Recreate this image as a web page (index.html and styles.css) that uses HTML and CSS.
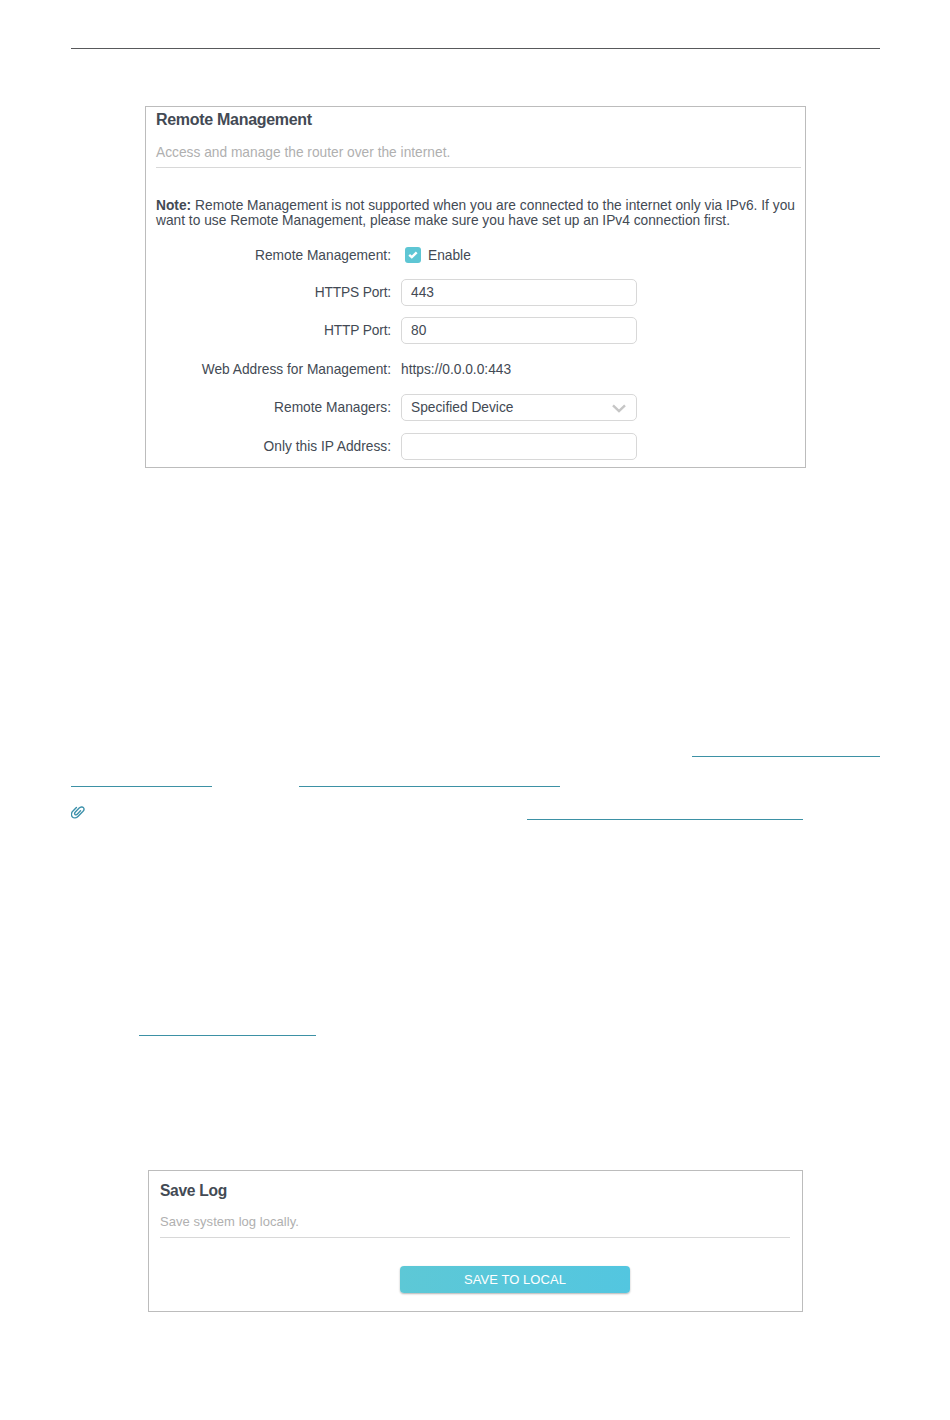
FILE: index.html
```
<!DOCTYPE html>
<html lang="en">
<head>
    <meta charset="UTF-8">
    <meta name="viewport" content="width=device-width, initial-scale=1.0">
    <title>Remote Management</title>
    <link rel="stylesheet" href="styles.css">
</head>
<body>
    <div class="page">
        <hr class="page-rule">

        <section class="panel remote">
            <h2>Remote Management</h2>
            <p class="subtitle">Access and manage the router over the internet.</p>
            <div class="note">
                <div class="note-first"><b>Note:</b> Remote Management is not supported when you are connected to the internet only via IPv6. If you</div>
                <div class="note-second">want to use Remote Management, please make sure you have set up an IPv4 connection first.</div>
            </div>
            <div class="form">
                <div class="row row-check">
                    <span class="label">Remote Management:</span>
                    <span class="checkbox">
                        <svg width="16" height="16" viewBox="0 0 16 16"><path d="M4.2 7.8l2.6 2.4 4.9-4.8" fill="none" stroke="#fff" stroke-width="2.4"/></svg>
                    </span>
                    <span>Enable</span>
                </div>
                <div class="row">
                    <span class="label label-tight">HTTPS Port:</span>
                    <div class="field">443</div>
                </div>
                <div class="row">
                    <span class="label label-tight">HTTP Port:</span>
                    <div class="field">80</div>
                </div>
                <div class="row">
                    <span class="label">Web Address for Management:</span>
                    <span class="address">https://0.0.0.0:443</span>
                </div>
                <div class="row">
                    <span class="label">Remote Managers:</span>
                    <div class="field select">
                        <span>Specified Device</span>
                        <svg width="14" height="9" viewBox="0 0 14 9"><path d="M1 1.4l6 5.8 6-5.8" fill="none" stroke="#c6c6c6" stroke-width="2.4"/></svg>
                    </div>
                </div>
                <div class="row">
                    <span class="label">Only this IP Address:</span>
                    <div class="field"></div>
                </div>
            </div>
        </section>

        <div class="links">
            <div class="link-row first"><span class="line line-a"></span></div>
            <div class="link-row second"><span class="line line-b"></span><span class="line line-c"></span></div>
            <div class="link-row third">
                <svg class="clip" width="14" height="13" viewBox="0 0 14 13">
                    <path d="M5.4 1.5L2 4.9C.2 6.9.1 9.4 1.4 10.9c1.5 1.5 4.1 1.1 5.8-.6l4.6-4.7c1.3-1.4 1.5-3 .6-4-.9-1-2.9-.8-4.2.5L4.4 6c-.9 1-.9 2-.4 2.5.6.6 1.5.4 2.2-.3l3.3-3.4" fill="none" stroke="#3d91ab" stroke-width="1.4" stroke-linecap="round"/>
                </svg>
                <span class="line line-d"></span>
            </div>
            <div class="link-row fourth"><span class="line line-e"></span></div>
        </div>

        <section class="panel log">
            <h2>Save Log</h2>
            <p class="subtitle">Save system log locally.</p>
            <button type="button">SAVE TO LOCAL</button>
        </section>
    </div>
</body>
</html>
```
FILE: styles.css
```
* {
    box-sizing: border-box;
}
body {
    margin: 0;
    background-color: #fff;
    color: #434a54;
    font-family: "Liberation Sans", Arial, sans-serif;
    font-size: 13.75px;
}
h2, p {
    margin: 0;
}
.page {
    height: 1420px;
    padding: 48px 70px 0 71px;
}
.page-rule {
    height: 1px;
    margin: 0;
    border: none;
    background-color: #58595b;
}
.panel {
    border: 1px solid #bcbcbc;
}
.panel h2 {
    color: #434a54;
    white-space: nowrap;
}
.subtitle {
    color: #b0b0b0;
    border-bottom: 1px solid #d8d8d8;
    white-space: nowrap;
}
.remote {
    width: 661px;
    height: 362px;
    margin: 57px 0 0 74px;
    padding: 3px 4px 0 10px;
}
.remote h2 {
    font-size: 16px;
    letter-spacing: -0.3px;
    line-height: 20px;
}
.remote .subtitle {
    height: 38px;
    padding-top: 13px;
    line-height: 20px;
}
.note {
    padding-top: 30px;
    line-height: 15px;
    white-space: nowrap;
}
.note-first {
    height: 15px;
    letter-spacing: 0.015px;
}
.form {
    padding-top: 13.5px;
}
.row {
    display: flex;
    align-items: center;
    height: 27px;
    margin-bottom: 11.5px;
}
.row-check {
    margin-bottom: 10.3px;
}
.label {
    width: 235px;
    margin-right: 10px;
    text-align: right;
    white-space: nowrap;
}
.label-tight {
    letter-spacing: -0.15px;
}
.checkbox {
    width: 16px;
    height: 16px;
    margin: 0 7px 0 4px;
    border-radius: 3px;
    background-color: #5ec6d4;
}
.checkbox svg {
    display: block;
}
.field {
    display: flex;
    align-items: center;
    justify-content: space-between;
    width: 236px;
    height: 27px;
    padding: 0 10px 0 9px;
    border: 1px solid #d8d8d8;
    border-radius: 5px;
}
.select svg {
    margin-top: 2px;
}
.links {
    height: 702px;
    padding-top: 288px;
}
.link-row {
    display: flex;
    align-items: flex-end;
}
.line {
    height: 1px;
    background-color: #3d91a5;
}
.first {
    justify-content: flex-end;
    height: 1px;
}
.second {
    height: 30px;
}
.third {
    height: 33px;
}
.fourth {
    height: 216px;
}
.line-a {
    width: 188px;
}
.line-b {
    width: 141px;
}
.line-c {
    width: 261px;
    margin-left: 87px;
}
.clip {
    margin-bottom: 1.5px;
}
.line-d {
    width: 276px;
    margin-left: 442px;
}
.line-e {
    width: 177px;
    margin-left: 68px;
}
.log {
    width: 655px;
    height: 142px;
    margin-left: 77px;
    padding: 9px 12px 0 11px;
}
.log h2 {
    font-size: 15.6px;
    letter-spacing: -0.3px;
    line-height: 22px;
}
.log .subtitle {
    height: 36px;
    padding-top: 10px;
    font-size: 13px;
    letter-spacing: 0.05px;
    line-height: 20px;
}
.log button {
    display: block;
    width: 230px;
    height: 27px;
    margin: 28px 0 0 240px;
    padding: 0;
    border: none;
    border-radius: 4px;
    background: linear-gradient(90deg, #5dc8d6, #53c6e0);
    box-shadow: 0 1px 2px rgba(0,0,0,0.3);
    color: #fff;
    font-family: inherit;
    font-size: 13px;
    letter-spacing: 0.08px;
}
```
